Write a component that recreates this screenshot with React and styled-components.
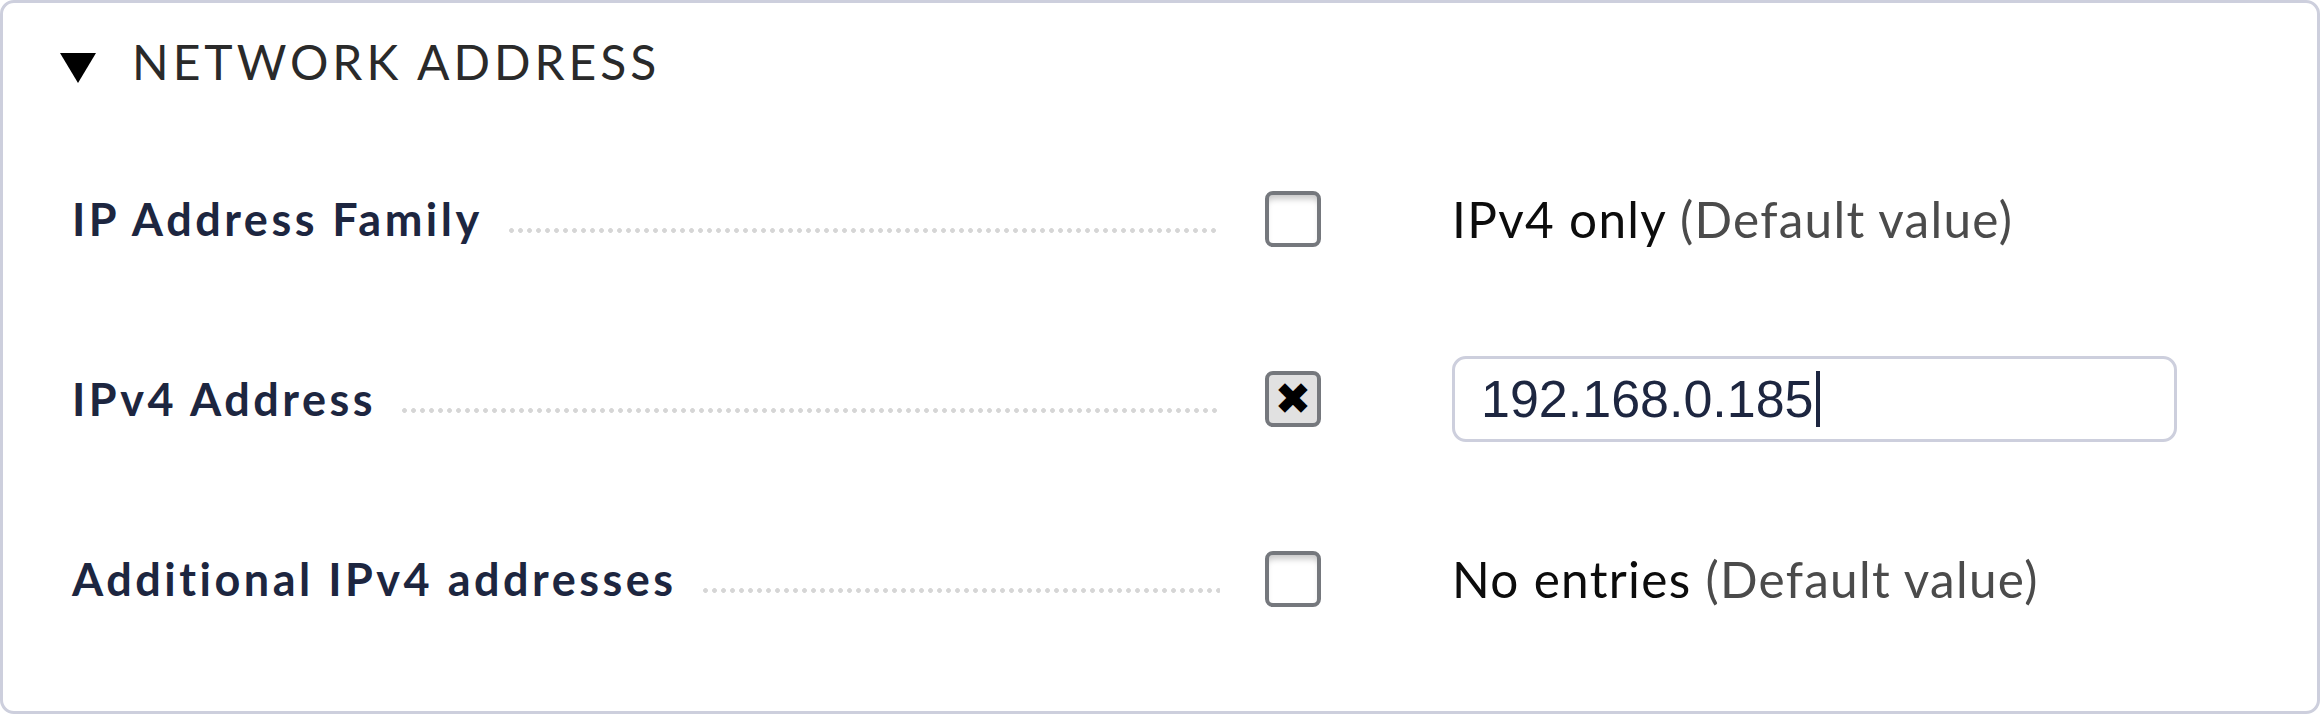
import React from 'react'
import styled, { createGlobalStyle } from 'styled-components';

const GlobalStyle = createGlobalStyle`
  html, body {
    margin: 0;
    padding: 0;
    background: #ffffff;
  }
  * {
    box-sizing: border-box;
  }
`;

const Panel = styled.div`
  width: 2320px;
  height: 714px;
  border: 3px solid #cdcfdd;
  border-radius: 14px;
  background: #ffffff;
  padding: 36px 0 0 57px;
  font-family: Lato, "Noto Sans", sans-serif;
`;

const Header = styled.div`
  display: flex;
  align-items: center;
  gap: 36px;
  height: 46px;
`;

const Arrow = styled.div`
  width: 0;
  height: 0;
  border-left: 18px solid transparent;
  border-right: 18px solid transparent;
  border-top: 30px solid #000000;
  margin-top: 12px;
`;

const Heading = styled.h2`
  margin: 0;
  font-size: 48px;
  font-weight: 400;
  letter-spacing: 4px;
  color: #2a2a2a;
  line-height: 1;
`;

const Rows = styled.div`
  display: grid;
  grid-template-columns: 1148px 232px 725px;
  grid-auto-rows: 180px;
  padding: 44px 0 0 12px;
  align-items: center;
`;

const Label = styled.div`
  display: flex;
  gap: 24px;
  height: 100%;
  align-items: center;
`;

const LabelText = styled.span`
  font-size: 45px;
  font-weight: 700;
  letter-spacing: 3.5px;
  color: #1d2640;
  white-space: nowrap;
`;

const Leader = styled.span`
  flex: 1;
  height: 5px;
  margin-top: 22px;
  background-image: radial-gradient(circle, #d6d6d6 2.1px, transparent 2.6px);
  background-size: 9px 5px;
  background-repeat: repeat-x;
`;

const Check = styled.div`
  width: 56px;
  height: 56px;
  border: 4px solid #75787d;
  border-radius: 8px;
  margin-left: 45px;
  background: ${p => (p.checked ? '#e1e1e1' : '#ffffff')};
  box-shadow: ${p => (p.checked ? 'none' : 'inset 0 7px 6px -3px rgba(0,0,0,0.22)')};
  display: flex;
  align-items: center;
  justify-content: center;
  font-family: "DejaVu Sans", sans-serif;
  font-size: 44px;
  color: #000000;
  line-height: 1;
`;

const Value = styled.div`
  font-size: 49.5px;
  letter-spacing: 1.3px;
  color: #0c0c0c;
  white-space: nowrap;
`;

const Hint = styled.span`
  color: #4b4b4b;
`;

const Field = styled.div`
  width: 725px;
  height: 86px;
  border: 3px solid #cdcfdd;
  border-radius: 14px;
  display: flex;
  align-items: center;
  padding-left: 26px;
  font-family: "Liberation Sans", Arial, sans-serif;
  font-size: 52px;
  color: #1d2640;
`;

const Caret = styled.span`
  display: inline-block;
  width: 4px;
  height: 56px;
  background: #1d2640;
  margin-left: 2px;
`;

const rows = [
  { label: 'IP Address Family', checked: false, value: 'IPv4 only' },
  { label: 'IPv4 Address', checked: true, input: '192.168.0.185' },
  { label: 'Additional IPv4 addresses', checked: false, value: 'No entries' },
];

export default function App() {
  return (
    <>
      <GlobalStyle />
      <Panel>
        <Header>
          <Arrow />
          <Heading>NETWORK ADDRESS</Heading>
        </Header>
        <Rows>
          {rows.map((r) => (
            <React.Fragment key={r.label}>
              <Label>
                <LabelText>{r.label}</LabelText>
                <Leader />
              </Label>
              <div>
                <Check checked={r.checked}>{r.checked ? '✖' : null}</Check>
              </div>
              {r.input ? (
                <Field>
                  {r.input}
                  <Caret />
                </Field>
              ) : (
                <Value>
                  {r.value} <Hint>(Default value)</Hint>
                </Value>
              )}
            </React.Fragment>
          ))}
        </Rows>
      </Panel>
    </>
  )
}
